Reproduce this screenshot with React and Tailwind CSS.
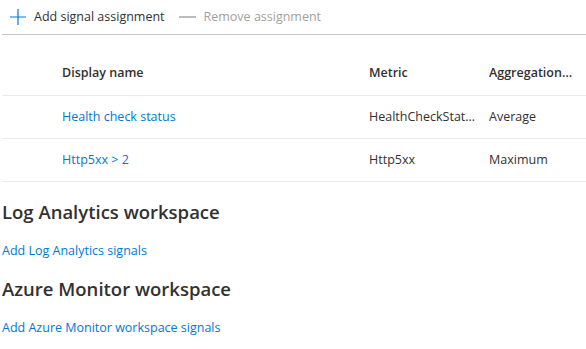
import React from 'react';

const rows = [
    { name: 'Health check status', metric: 'HealthCheckStatus', aggregation: 'Average' },
    { name: 'Http5xx > 2', metric: 'Http5xx', aggregation: 'Maximum' },
];

export default function App() {
    return (
        <div className="w-[586px] h-[349px] bg-white overflow-hidden text-[#323130] text-[12.5px] font-['Open_Sans',sans-serif]">
            {/* Command bar */}
            <div className="ml-[2px] h-[35px] border-b border-[#c8c6c4] flex items-center pl-[8px]">
                <button className="flex items-center gap-[8px] text-[#323130]">
                    <svg width="16" height="16" viewBox="0 0 16 16" className="text-[#0078d4]">
                        <path d="M8 0v16M0 8h16" stroke="currentColor" strokeWidth="1.2" fill="none" />
                    </svg>
                    <span>Add signal assignment</span>
                </button>
                <button className="ml-[14px] flex items-center gap-[8px] text-[#a19f9d]">
                    <svg width="17" height="16" viewBox="0 0 17 16">
                        <path d="M0 8h17" stroke="currentColor" strokeWidth="1.4" fill="none" />
                    </svg>
                    <span>Remove assignment</span>
                </button>
            </div>

            {/* Signals table */}
            <div className="mt-[17px] ml-[2px]">
                <div className="h-[44px] flex items-center border-b border-[#edebe9] font-semibold">
                    <div className="w-[367px] pl-[60px]">Display name</div>
                    <div className="w-[120px]">Metric</div>
                    <div className="w-[84px] truncate">Aggregation type</div>
                </div>
                {rows.map((row) => (
                    <div key={row.name} className="h-[43px] flex items-center border-b border-[#edebe9]">
                        <div className="w-[367px] pl-[60px] text-[#0078d4]">{row.name}</div>
                        <div className="w-[120px] pr-[12px] truncate">{row.metric}</div>
                        <div className="w-[84px] truncate">{row.aggregation}</div>
                    </div>
                ))}
            </div>

            {/* Workspaces */}
            <div className="ml-[2px]">
                <h2 className="mt-[18px] text-[18.5px] font-semibold leading-[24px]">Log Analytics workspace</h2>
                <a className="block mt-[17px] text-[#0078d4] leading-[20px]">Add Log Analytics signals</a>
                <h2 className="mt-[16px] text-[18.5px] font-semibold leading-[24px]">Azure Monitor workspace</h2>
                <a className="block mt-[17px] text-[#0078d4] leading-[20px]">Add Azure Monitor workspace signals</a>
            </div>
        </div>
    );
}
